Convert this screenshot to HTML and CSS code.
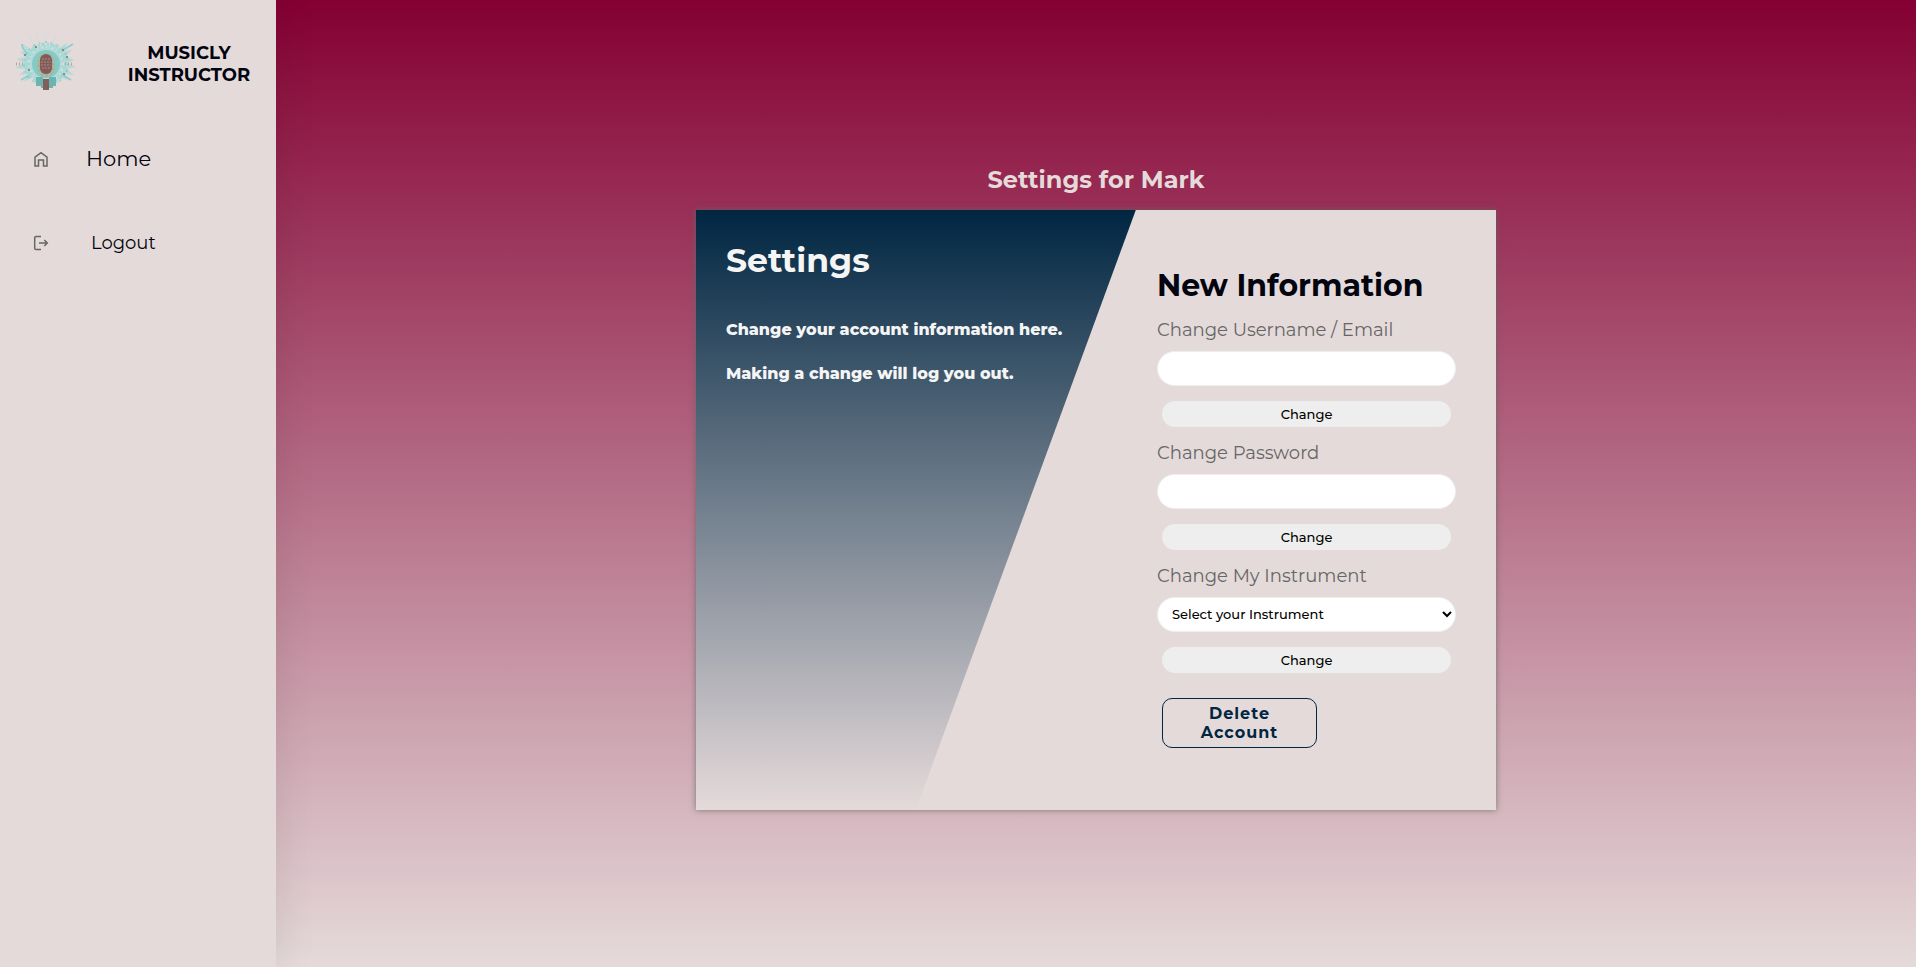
FILE: index.html
```html
<!DOCTYPE html>
<html lang="en">
<head>
<meta charset="utf-8">
<title>Musicly Instructor - Settings</title>
<link rel="stylesheet" href="styles.css">
</head>
<body>
<div class="layout">
  <aside class="sidebar">
    <header class="brand">
      <svg class="brand-logo" viewBox="0 0 60 60" aria-hidden="true">
        <g fill="none" stroke="#b9e0dd" stroke-width="1" opacity=".6">
          <path d="M18 12 13 1M23 9 20 0M30 8V0M37 10 40 0M42 13 48 4"/>
        </g>
        <path fill="#a3d8d4" opacity=".75" d="M30 11l5 3 5-4 2 5 9-6-3 8 8-1-6 6 8 4-7 3 9 4-9 2 7 6-9-1 3 6-8-3-3 6-5-3-6 4-6-4-5 3-2-6-9 5 4-8-9 1 7-6-11-1 9-5-7-4 8-2-5-6 8 1-6-8 9 5 3-5 4 4z"/>
        <path fill="none" stroke="#8fcfcc" stroke-width="2" d="M14 21Q6 16 6 10M44 18l13-8M15 40 5 46M45 40l10 6"/>
        <circle cx="30" cy="30" r="19" fill="none" stroke="#a3dad6" stroke-width="5" stroke-dasharray="2 1 4 2"/>
        <circle cx="30" cy="30" r="14" fill="#84cbc7"/>
        <circle cx="30" cy="30" r="22" fill="none" stroke="#6fbdbb" stroke-width="1" stroke-dasharray="1 5 2 4"/>
        <circle cx="30" cy="30" r="17" fill="none" stroke="#d5e1d9" stroke-width="2" stroke-dasharray="1 4 2 3"/>
        <ellipse cx="30" cy="31" rx="9" ry="12" fill="#9fb199"/>
        <ellipse cx="30" cy="31" rx="8" ry="11" fill="none" stroke="#cfc096" stroke-width="1" stroke-dasharray="3 2"/>
        <rect x="24" y="20" width="12" height="20" rx="6" fill="#835a57"/>
        <path stroke="#a98d88" stroke-width="1" stroke-dasharray="2 1" d="M26 25h8M25 28h10M25 31h10M26 34h8"/>
        <path fill="#6fb3b1" d="M20 43h7v11h-2v-2h-5zM33 43h7v9h-3v2h-4z"/>
        <path fill="#80605d" d="M27 45h6v11h-6z"/>
        <path stroke="#b9a78d" stroke-width="3" stroke-dasharray="1 2" d="M0 30h8M49 30h8"/>
        <g fill="#80706f"><circle cx="9" cy="21" r="1"/><circle cx="20" cy="13" r="1"/><circle cx="47" cy="16" r="1"/><circle cx="51" cy="23" r="1"/><circle cx="13" cy="36" r="1"/><circle cx="48" cy="40" r="1"/></g>
      </svg>
      <span class="brand-name">MUSICLY INSTRUCTOR</span>
    </header>
    <nav class="menu">
      <a class="menu-link" href="#home">
        <svg class="menu-icon" viewBox="0 0 18 18" aria-hidden="true"><path d="M3 7.2 9 2.700l6 4.500V16h-3.500v-6h-5v6H3z"/></svg>
        <span>Home</span>
      </a>
      <a class="menu-link menu-link-small" href="#logout">
        <svg class="menu-icon" viewBox="0 0 18 18" aria-hidden="true"><path d="M9 2.500H4Q2.700 2.500 2.700 3.800v10.400Q2.700 15.500 4 15.500h5M7 9h8M12.300 6l3 3-3 3"/></svg>
        <span>Logout</span>
      </a>
    </nav>
  </aside>
  <main class="content">
    <h1 class="page-title">Settings for Mark</h1>
    <div class="card">
      <section class="intro">
        <h2 class="intro-title">Settings</h2>
        <p class="intro-text">Change your account information here.</p>
        <p class="intro-text">Making a change will log you out.</p>
      </section>
      <section class="details">
        <h2 class="details-title">New Information</h2>
        <form class="field">
          <label for="username">Change Username / Email</label>
          <input class="control" id="username" type="text">
          <button class="change" type="button">Change</button>
        </form>
        <form class="field">
          <label for="password">Change Password</label>
          <input class="control" id="password" type="password">
          <button class="change" type="button">Change</button>
        </form>
        <form class="field">
          <label for="instrument">Change My Instrument</label>
          <select class="control" id="instrument"><option>Select your Instrument</option></select>
          <button class="change" type="button">Change</button>
        </form>
        <button class="delete" type="button">Delete Account</button>
      </section>
    </div>
  </main>
</div>
</body>
</html>
```
FILE: styles.css
```css
* { box-sizing: border-box; }

body {
  margin: 0;
  color: #02040f;
  font-family: Montserrat, Inter, sans-serif;
}

h1, h2, p { margin: 0; }

.layout {
  display: flex;
  min-height: 100vh;
  background: linear-gradient(#840032, #e5dada);
}

.sidebar {
  flex: 0 0 276px;
  background: #e5dada;
  box-shadow: 0 0 40px rgba(0, 0, 0, .1);
}

.brand {
  display: flex;
  align-items: center;
  gap: 40px;
  padding: 34px 14px 0 16px;
}

.brand-logo { flex: 0 0 60px; height: 60px; }

.brand-name {
  flex: 1;
  font-size: 18px;
  font-weight: 700;
  line-height: 22px;
  text-align: center;
}

.menu {
  display: flex;
  flex-direction: column;
  gap: 54px;
  padding: 50px 32px 0;
}

.menu-link {
  display: flex;
  align-items: center;
  gap: 36px;
  color: inherit;
  font-size: 21px;
  line-height: 30px;
  text-decoration: none;
}

.menu-link-small { gap: 41px; font-size: 18px; }

.menu-icon {
  width: 18px;
  height: 18px;
  fill: none;
  stroke: #666;
  stroke-width: 1.5;
}

.content {
  display: flex;
  flex: 1;
  flex-direction: column;
  align-items: center;
  justify-content: center;
  gap: 14px;
  padding: 6px 16px 0;
}

.page-title {
  color: #e5dada;
  font-size: 24px;
  line-height: 32px;
}

.card {
  display: grid;
  grid-template-columns: 55% 1fr;
  width: 100%;
  max-width: 800px;
  min-height: 600px;
  background: #e5dada;
  box-shadow: 0 0 6px rgba(100, 100, 100, .8);
}

.intro {
  padding: 28px 30px;
  background: linear-gradient(#002642, #e5dada);
  clip-path: polygon(0 0, 100% 0, 50% 100%, 0 100%);
  color: #f5f5f5;
}

.intro-title {
  margin-bottom: 36px;
  font-size: 33px;
  line-height: 44px;
}

.intro-text {
  margin-bottom: 20px;
  font-size: 16px;
  font-weight: 800;
  line-height: 24px;
  white-space: nowrap;
}

.details { padding: 56px 40px 0 21px; }

.details-title {
  margin-bottom: 13px;
  font-size: 30px;
  line-height: 40px;
}

.field {
  display: flex;
  flex-direction: column;
  margin-bottom: 15px;
}

.field label {
  margin-bottom: 10px;
  color: #666;
  font-size: 18px;
  line-height: 22px;
}

.control {
  width: 100%;
  height: 35px;
  margin-bottom: 15px;
  padding: 0 10px;
  border: 1px solid #eee;
  border-radius: 20px;
  background-color: #fff;
  color: #000;
  font-family: inherit;
  font-size: 13px;
  font-weight: 500;
}

.change {
  height: 26px;
  margin: 0 5px;
  padding: 0;
  border: 0;
  border-radius: 20px;
  background: #eee;
  color: #000;
  font-family: inherit;
  font-size: 13px;
  font-weight: 500;
}

.delete {
  width: 155px;
  height: 50px;
  margin: 10px 5px;
  padding: 0 24px;
  border: 1px solid #002642;
  border-radius: 10px;
  background: transparent;
  color: #002642;
  font-family: inherit;
  font-size: 16px;
  font-weight: 700;
  letter-spacing: 1px;
  line-height: 19px;
}
```
